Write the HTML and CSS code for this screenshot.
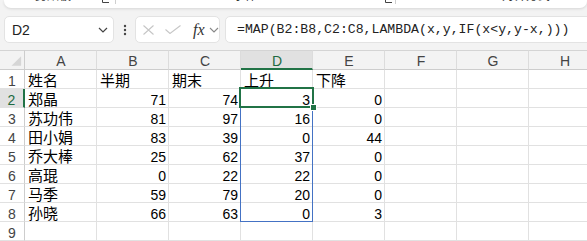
FILE: index.html
```html
<!DOCTYPE html>
<html lang="zh">
<head>
<meta charset="utf-8">
<link rel="stylesheet" href="styles.css">
</head>
<body>
<div class="ribbon">
  <div class="rgroup g1"><span class="rlabel">剪贴板</span><svg class="launch" width="8" height="8" viewBox="0 0 8 8"><path d="M0.5 1v6.5h6.5M3 5l4-4M4 1h3v3" fill="none" stroke="#444" stroke-width="1"/></svg></div>
  <div class="rsep"></div>
  <div class="rgroup g2"><span class="rlabel">字体</span><svg class="launch" width="8" height="8" viewBox="0 0 8 8"><path d="M0.5 1v6.5h6.5M3 5l4-4M4 1h3v3" fill="none" stroke="#444" stroke-width="1"/></svg></div>
  <div class="rsep"></div>
  <div class="rgroup g3"><span class="rlabel">对齐方式</span></div>
</div>

<div class="fbar">
  <div class="namebox"><span class="nm">D2</span><svg width="10" height="6" viewBox="0 0 10 6"><path d="M1 1l4 4 4-4" fill="none" stroke="#444" stroke-width="1.2"/></svg></div>
  <div class="dots"><svg width="4" height="12" viewBox="0 0 4 12"><circle cx="2" cy="2" r="1.2" fill="#444"/><circle cx="2" cy="6" r="1.2" fill="#444"/><circle cx="2" cy="10" r="1.2" fill="#444"/></svg></div>
  <div class="fxbox">
    <svg class="ic-x" width="13" height="10" viewBox="0 0 13 10"><path d="M1.5 0.5l10 9M11.5 0.5l-10 9" fill="none" stroke="#c6c6c6" stroke-width="1.1"/></svg>
    <svg class="ic-ok" width="16" height="9" viewBox="0 0 16 9"><path d="M0.5 4.5l4.5 4 10.5-8" fill="none" stroke="#c6c6c6" stroke-width="1.1"/></svg>
    <span class="fx">fx</span>
    <svg class="ic-dd" width="10" height="6" viewBox="0 0 10 6"><path d="M1 1l4 4 4-4" fill="none" stroke="#888" stroke-width="1.1"/></svg>
  </div>
  <div class="formula">=MAP(B2:B8,C2:C8,LAMBDA(x,y,IF(x&lt;y,y-x,)))</div>
</div>

<div class="sheet">
  <div class="cell corner"><svg width="25" height="19" viewBox="0 0 25 19"><polygon points="22,6 22,16 12,16" fill="#d6d6d6"/></svg></div>
  <div class="cell ch">A</div>
  <div class="cell ch">B</div>
  <div class="cell ch">C</div>
  <div class="cell ch sel">D</div>
  <div class="cell ch">E</div>
  <div class="cell ch">F</div>
  <div class="cell ch">G</div>
  <div class="cell ch">H</div>

  <div class="cell rh">1</div>
  <div class="cell t">姓名</div><div class="cell t">半期</div><div class="cell t">期末</div><div class="cell t">上升</div><div class="cell t">下降</div><div class="cell"></div><div class="cell"></div><div class="cell"></div>

  <div class="cell rh sel">2</div>
  <div class="cell t">郑晶</div><div class="cell num">71</div><div class="cell num">74</div><div class="cell num">3</div><div class="cell num">0</div><div class="cell"></div><div class="cell"></div><div class="cell"></div>

  <div class="cell rh">3</div>
  <div class="cell t">苏功伟</div><div class="cell num">81</div><div class="cell num">97</div><div class="cell num">16</div><div class="cell num">0</div><div class="cell"></div><div class="cell"></div><div class="cell"></div>

  <div class="cell rh">4</div>
  <div class="cell t">田小娟</div><div class="cell num">83</div><div class="cell num">39</div><div class="cell num">0</div><div class="cell num">44</div><div class="cell"></div><div class="cell"></div><div class="cell"></div>

  <div class="cell rh">5</div>
  <div class="cell t">乔大棒</div><div class="cell num">25</div><div class="cell num">62</div><div class="cell num">37</div><div class="cell num">0</div><div class="cell"></div><div class="cell"></div><div class="cell"></div>

  <div class="cell rh">6</div>
  <div class="cell t">高琨</div><div class="cell num">0</div><div class="cell num">22</div><div class="cell num">22</div><div class="cell num">0</div><div class="cell"></div><div class="cell"></div><div class="cell"></div>

  <div class="cell rh">7</div>
  <div class="cell t">马季</div><div class="cell num">59</div><div class="cell num">79</div><div class="cell num">20</div><div class="cell num">0</div><div class="cell"></div><div class="cell"></div><div class="cell"></div>

  <div class="cell rh">8</div>
  <div class="cell t">孙晓</div><div class="cell num">66</div><div class="cell num">63</div><div class="cell num">0</div><div class="cell num">3</div><div class="cell"></div><div class="cell"></div><div class="cell"></div>

  <div class="cell rh">9</div>
  <div class="cell"></div><div class="cell"></div><div class="cell"></div><div class="cell"></div><div class="cell"></div><div class="cell"></div><div class="cell"></div><div class="cell"></div>

  <div class="spill"></div>
  <div class="selbox"></div>
  <div class="handle"></div>
</div>
</body>
</html>
```
FILE: styles.css
```css
html, body {
  margin: 0;
  padding: 0;
}
body {
  width: 587px;
  height: 241px;
  overflow: hidden;
  background: #f3f3f3;
  font-family: "Liberation Sans", "Noto Sans CJK SC", sans-serif;
  color: #000;
}

/* ribbon remnant */
.ribbon {
  height: 8px;
  margin-left: 4px;
  background: #fff;
  border-radius: 0 0 7px 7px;
  box-shadow: 0 1px 3px rgba(0, 0, 0, 0.12);
  display: flex;
  overflow: hidden;
}
.rgroup {
  display: flex;
  align-items: flex-start;
  height: 8px;
}
.g1 { width: 111px; padding-left: 31px; box-sizing: border-box; }
.g2 { width: 279px; padding-left: 117px; box-sizing: border-box; }
.g3 { flex: 1; padding-left: 106px; }
.rlabel {
  font-size: 12px;
  line-height: 12px;
  margin-top: -10px;
  color: #333;
  white-space: nowrap;
}
.launch {
  margin-left: auto;
  margin-top: -5px;
}
.g1 .launch { margin-right: 5px; }
.g2 .launch { margin-right: 2px; }
.rsep {
  width: 1px;
  height: 4px;
  background: #cfcfcf;
}

/* formula bar */
.fbar {
  display: flex;
  align-items: center;
  height: 27px;
  margin-top: 8px;
  padding-left: 4px;
}
.namebox {
  width: 110px;
  height: 27px;
  box-sizing: border-box;
  background: #fff;
  border: 1px solid #e3e3e3;
  border-radius: 5px;
  display: flex;
  align-items: center;
  padding: 0 5px 0 7px;
  font-size: 14px;
  color: #222;
}
.namebox .nm { flex: 1; }
.dots {
  width: 21px;
  display: flex;
  justify-content: center;
}
.fxbox {
  width: 85px;
  height: 27px;
  box-sizing: border-box;
  background: #fff;
  border: 1px solid #e3e3e3;
  border-radius: 5px;
  display: flex;
  align-items: center;
  padding-left: 6px;
}
.ic-ok { margin-left: 10px; }
.fx {
  margin-left: 12px;
  font-family: "Liberation Serif", serif;
  font-style: italic;
  font-size: 16px;
  color: #333;
  line-height: 16px;
}
.ic-dd { margin-left: 4px; }
.formula {
  flex: 1;
  margin-left: 5px;
  margin-right: -8px;
  height: 27px;
  box-sizing: border-box;
  background: #fff;
  border: 1px solid #e3e3e3;
  border-radius: 5px;
  padding-left: 11px;
  display: flex;
  align-items: center;
  font-family: "Liberation Mono", monospace;
  font-size: 13.2px;
  color: #222;
  white-space: nowrap;
}

/* sheet */
.sheet {
  position: relative;
  margin-top: 7px;
  display: grid;
  grid-template-columns: 25px repeat(8, 72px);
  grid-template-rows: 20px repeat(9, 19px);
}
.cell {
  box-sizing: border-box;
  border-right: 1px solid #e1e1e1;
  border-bottom: 1px solid #e1e1e1;
  background: #fff;
  font-size: 14px;
  line-height: 14px;
  display: flex;
  align-items: flex-end;
  padding: 0 2px 0 3px;
  white-space: nowrap;
  overflow: hidden;
}
.cell.t { font-size: 15px; }
.cell.num { justify-content: flex-end; }
.cell.corner {
  padding: 0;
  background: #f3f3f3;
  border-top: 1px solid #d4d4d4;
  border-bottom: 1px solid #cdcdcd;
  border-right: 1px solid #cdcdcd;
}
.cell.ch {
  background: #f3f3f3;
  border-top: 1px solid #d4d4d4;
  border-bottom: 1px solid #cdcdcd;
  border-right: 1px solid #dcdcdc;
  justify-content: center;
  color: #444;
  padding-bottom: 1px;
}
.cell.ch.sel {
  background: #e1e1e1;
  color: #1e6b41;
  border-bottom: 2px solid #217346;
  padding-bottom: 0;
}
.cell.rh {
  border-right: 1px solid #cdcdcd;
  justify-content: center;
  color: #444;
  padding: 0;
}
.cell.rh.sel {
  background: #e1e1e1;
  color: #1e6b41;
  border-right: 2px solid #217346;
}

/* overlays */
.spill {
  position: absolute;
  left: 240px;
  top: 38px;
  width: 73px;
  height: 134px;
  box-sizing: border-box;
  border: 1px solid #4472c4;
}
.selbox {
  position: absolute;
  left: 239px;
  top: 37px;
  width: 75px;
  height: 21px;
  box-sizing: border-box;
  border: 2px solid #217346;
}
.handle {
  position: absolute;
  left: 310px;
  top: 54px;
  width: 7px;
  height: 7px;
  box-sizing: border-box;
  background: #217346;
  border: 1px solid #fff;
}
```
